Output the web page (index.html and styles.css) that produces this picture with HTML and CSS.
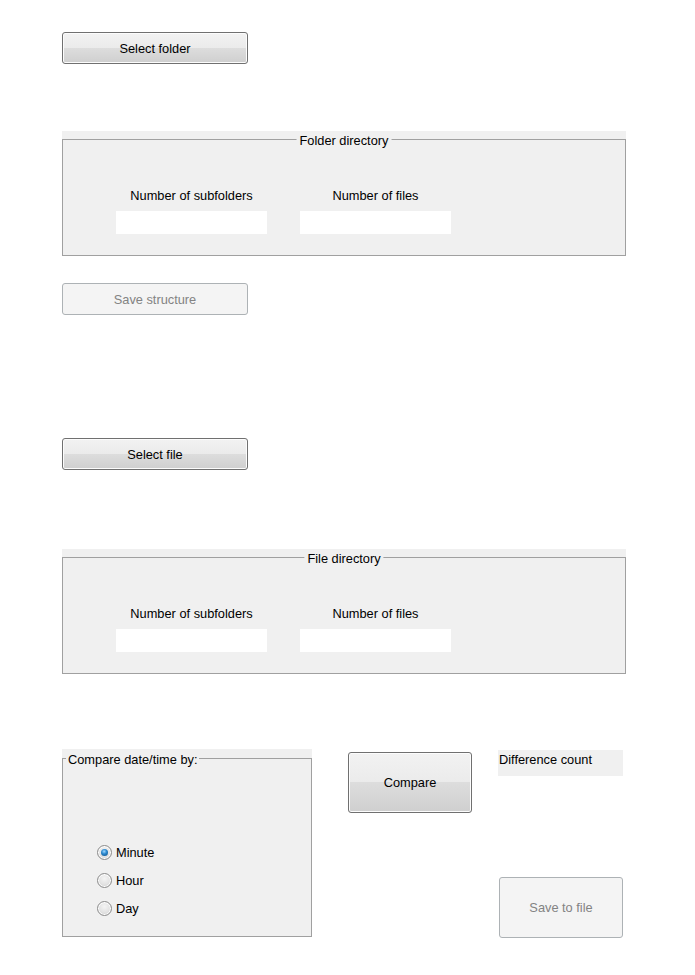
FILE: index.html
```html
<!DOCTYPE html>
<html>
<head>
<meta charset="utf-8">
<link rel="stylesheet" href="styles.css">
</head>
<body>
<div class="page">
  <button class="btn btn-top">Select folder</button>

  <section class="panel panel-dir">
    <div class="panel-box">
      <span class="panel-title centered">Folder directory</span>
      <div class="fields">
        <div class="field">
          <div class="field-label">Number of subfolders</div>
          <div class="field-input"></div>
        </div>
        <div class="field">
          <div class="field-label">Number of files</div>
          <div class="field-input"></div>
        </div>
      </div>
    </div>
  </section>

  <button class="btn btn-disabled btn-save-structure">Save structure</button>

  <button class="btn btn-top btn-select-file">Select file</button>

  <section class="panel panel-dir panel-file">
    <div class="panel-box">
      <span class="panel-title centered">File directory</span>
      <div class="fields">
        <div class="field">
          <div class="field-label">Number of subfolders</div>
          <div class="field-input"></div>
        </div>
        <div class="field">
          <div class="field-label">Number of files</div>
          <div class="field-input"></div>
        </div>
      </div>
    </div>
  </section>

  <div class="bottom-row">
    <section class="panel panel-compare">
      <div class="panel-box">
        <span class="panel-title left">Compare date/time by:</span>
        <div class="radios">
          <div class="radio-row"><span class="radio checked"></span><span>Minute</span></div>
          <div class="radio-row"><span class="radio"></span><span>Hour</span></div>
          <div class="radio-row"><span class="radio"></span><span>Day</span></div>
        </div>
      </div>
    </section>

    <button class="btn btn-compare">Compare</button>

    <div class="right-col">
      <div class="diff-count">Difference count</div>
      <button class="btn btn-disabled btn-save-file">Save to file</button>
    </div>
  </div>
</div>
</body>
</html>
```

FILE: styles.css
```css
html, body {
  margin: 0;
  padding: 0;
  background: #ffffff;
}

body {
  font-family: "Liberation Sans", Arial, sans-serif;
  font-size: 12.8px;
  color: #000;
}

.page {
  padding: 32px 0 0 62px;
  display: flex;
  flex-direction: column;
  align-items: flex-start;
}

.btn {
  font-family: inherit;
  font-size: 12.8px;
  color: #000;
  box-sizing: border-box;
  border: 1px solid #707070;
  border-radius: 3px;
  padding: 0;
  margin: 0;
  background: linear-gradient(to bottom, #f2f2f2 0%, #ebebeb 50%, #dddddd 50%, #cfcfcf 100%);
  box-shadow: inset 0 0 0 1px #fcfcfc;
  text-align: center;
}

.btn-top {
  width: 186px;
  height: 32px;
}

.btn-disabled {
  background: #f4f4f4;
  border-color: #adb2b5;
  color: #838383;
  box-shadow: none;
}

.btn-save-structure {
  width: 186px;
  height: 32px;
  margin-top: 27px;
}

.btn-select-file {
  margin-top: 123px;
}

.panel {
  background: #f0f0f0;
  padding-top: 8px;
  width: 564px;
}

.panel-dir {
  margin-top: 67px;
}

.panel-file {
  margin-top: 79px;
}

.panel-box {
  position: relative;
  border: 1px solid #a0a0a0;
  box-sizing: border-box;
}

.panel-dir .panel-box {
  height: 117px;
}

.panel-title {
  position: absolute;
  top: -7px;
  line-height: 15px;
  background: #f0f0f0;
  padding: 0 3px;
  white-space: nowrap;
}

.panel-title.centered {
  left: 50%;
  transform: translateX(-50%);
}

.panel-title.left {
  left: 3px;
  padding: 0 2px 0 2px;
}

.fields {
  display: flex;
  gap: 33px;
  padding: 47px 0 0 53px;
}

.field {
  display: flex;
  flex-direction: column;
  align-items: center;
  width: 151px;
}

.field-label {
  line-height: 17px;
  white-space: nowrap;
}

.field-input {
  margin-top: 7px;
  width: 151px;
  height: 23px;
  background: #ffffff;
}

.bottom-row {
  margin-top: 75px;
  display: flex;
  align-items: flex-start;
}

.panel-compare {
  width: 250px;
  padding-top: 9px;
}

.panel-compare .panel-box {
  height: 179px;
}

.radios {
  padding: 79px 0 0 34px;
  display: flex;
  flex-direction: column;
}

.radio-row {
  display: flex;
  align-items: center;
  height: 28px;
  gap: 4px;
}

.radio {
  width: 15px;
  height: 15px;
  box-sizing: border-box;
  border-radius: 50%;
  border: 1px solid #8c8c8c;
  background: radial-gradient(circle at 50% 35%, #f4f4f4 0%, #e2e2e2 55%, #c8c8c8 100%);
  box-shadow: inset 0 0 0 1px #ffffff;
  position: relative;
}

.radio.checked::after {
  content: "";
  position: absolute;
  left: 3px;
  top: 3px;
  width: 7px;
  height: 7px;
  border-radius: 50%;
  background: radial-gradient(circle at 45% 35%, #9fd8ff 0%, #2d8ad0 40%, #0d4a80 100%);
}

.btn-compare {
  margin: 3px 0 0 36px;
  width: 124px;
  height: 61px;
}

.right-col {
  margin-left: 26px;
  display: flex;
  flex-direction: column;
  align-items: flex-start;
  margin-top: 1px;
}

.diff-count {
  width: 125px;
  height: 26px;
  box-sizing: border-box;
  background: #f0f0f0;
  padding: 2px 0 0 1px;
  line-height: 16px;
}

.btn-save-file {
  margin: 101px 0 0 1px;
  width: 124px;
  height: 61px;
}
```
